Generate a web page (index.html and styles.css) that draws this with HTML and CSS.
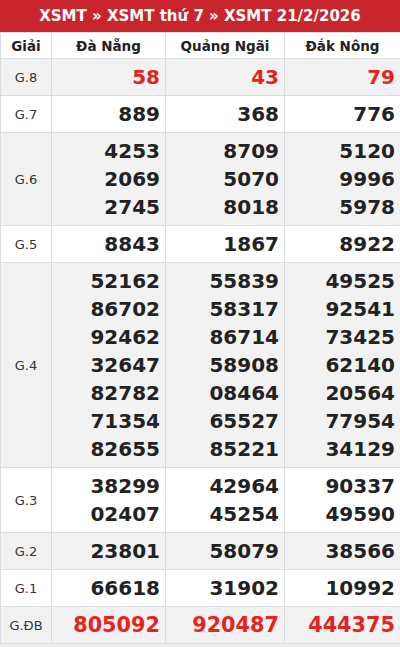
FILE: index.html
```html
<!DOCTYPE html>
<html lang="vi">
<head>
<meta charset="utf-8">
<link rel="stylesheet" href="styles.css">
</head>
<body>
<div class="result">
  <div class="title">XSMT » XSMT thứ 7 » XSMT 21/2/2026</div>
  <table class="kq">
    <colgroup>
      <col class="c-label"><col class="c-a"><col class="c-b"><col class="c-c">
    </colgroup>
    <thead>
      <tr><th>Giải</th><th>Đà Nẵng</th><th>Quảng Ngãi</th><th>Đắk Nông</th></tr>
    </thead>
    <tbody>
      <tr class="alt"><td class="lbl">G.8</td><td class="num red">58</td><td class="num red">43</td><td class="num red">79</td></tr>
      <tr><td class="lbl">G.7</td><td class="num">889</td><td class="num">368</td><td class="num">776</td></tr>
      <tr class="alt"><td class="lbl">G.6</td><td class="num">4253<br>2069<br>2745</td><td class="num">8709<br>5070<br>8018</td><td class="num">5120<br>9996<br>5978</td></tr>
      <tr><td class="lbl">G.5</td><td class="num">8843</td><td class="num">1867</td><td class="num">8922</td></tr>
      <tr class="alt"><td class="lbl">G.4</td><td class="num">52162<br>86702<br>92462<br>32647<br>82782<br>71354<br>82655</td><td class="num">55839<br>58317<br>86714<br>58908<br>08464<br>65527<br>85221</td><td class="num">49525<br>92541<br>73425<br>62140<br>20564<br>77954<br>34129</td></tr>
      <tr><td class="lbl">G.3</td><td class="num">38299<br>02407</td><td class="num">42964<br>45254</td><td class="num">90337<br>49590</td></tr>
      <tr class="alt"><td class="lbl">G.2</td><td class="num">23801</td><td class="num">58079</td><td class="num">38566</td></tr>
      <tr><td class="lbl">G.1</td><td class="num">66618</td><td class="num">31902</td><td class="num">10992</td></tr>
      <tr class="alt"><td class="lbl">G.ĐB</td><td class="num red db">805092</td><td class="num red db">920487</td><td class="num red db">444375</td></tr>
    </tbody>
  </table>
</div>
</body>
</html>
```
FILE: styles.css
```css
html, body {
  margin: 0;
  padding: 0;
  background: #eeeeef;
}
body {
  font-family: "DejaVu Sans", sans-serif;
  color: #222;
}
.result {
  width: 400px;
}
.title {
  background: #c9252d;
  color: #fff;
  font-weight: bold;
  font-size: 15px;
  height: 32px;
  line-height: 32px;
  text-align: center;
}
.kq {
  width: 400px;
  border-collapse: collapse;
  table-layout: fixed;
  background: #fff;
}
.c-label { width: 51px; }
.c-a { width: 114px; }
.c-b { width: 119px; }
.c-c { width: 116px; }
.kq th, .kq td {
  border: 1px solid #dcdde0;
}
.kq th {
  font-size: 13.5px;
  font-weight: bold;
  color: #222;
  height: 25px;
  padding: 0;
  text-align: center;
  background: #fff;
}
.kq tr.alt td {
  background: #f2f2f3;
}
.lbl {
  font-size: 13px;
  color: #333;
  text-align: center;
  padding: 0;
  vertical-align: middle;
}
.num {
  font-size: 20px;
  font-weight: bold;
  line-height: 28px;
  text-align: right;
  padding: 4px 5px 4px 0;
  color: #222;
}
.num.red {
  color: #e8231c;
}
.num.db {
  font-size: 20.8px;
}
```
